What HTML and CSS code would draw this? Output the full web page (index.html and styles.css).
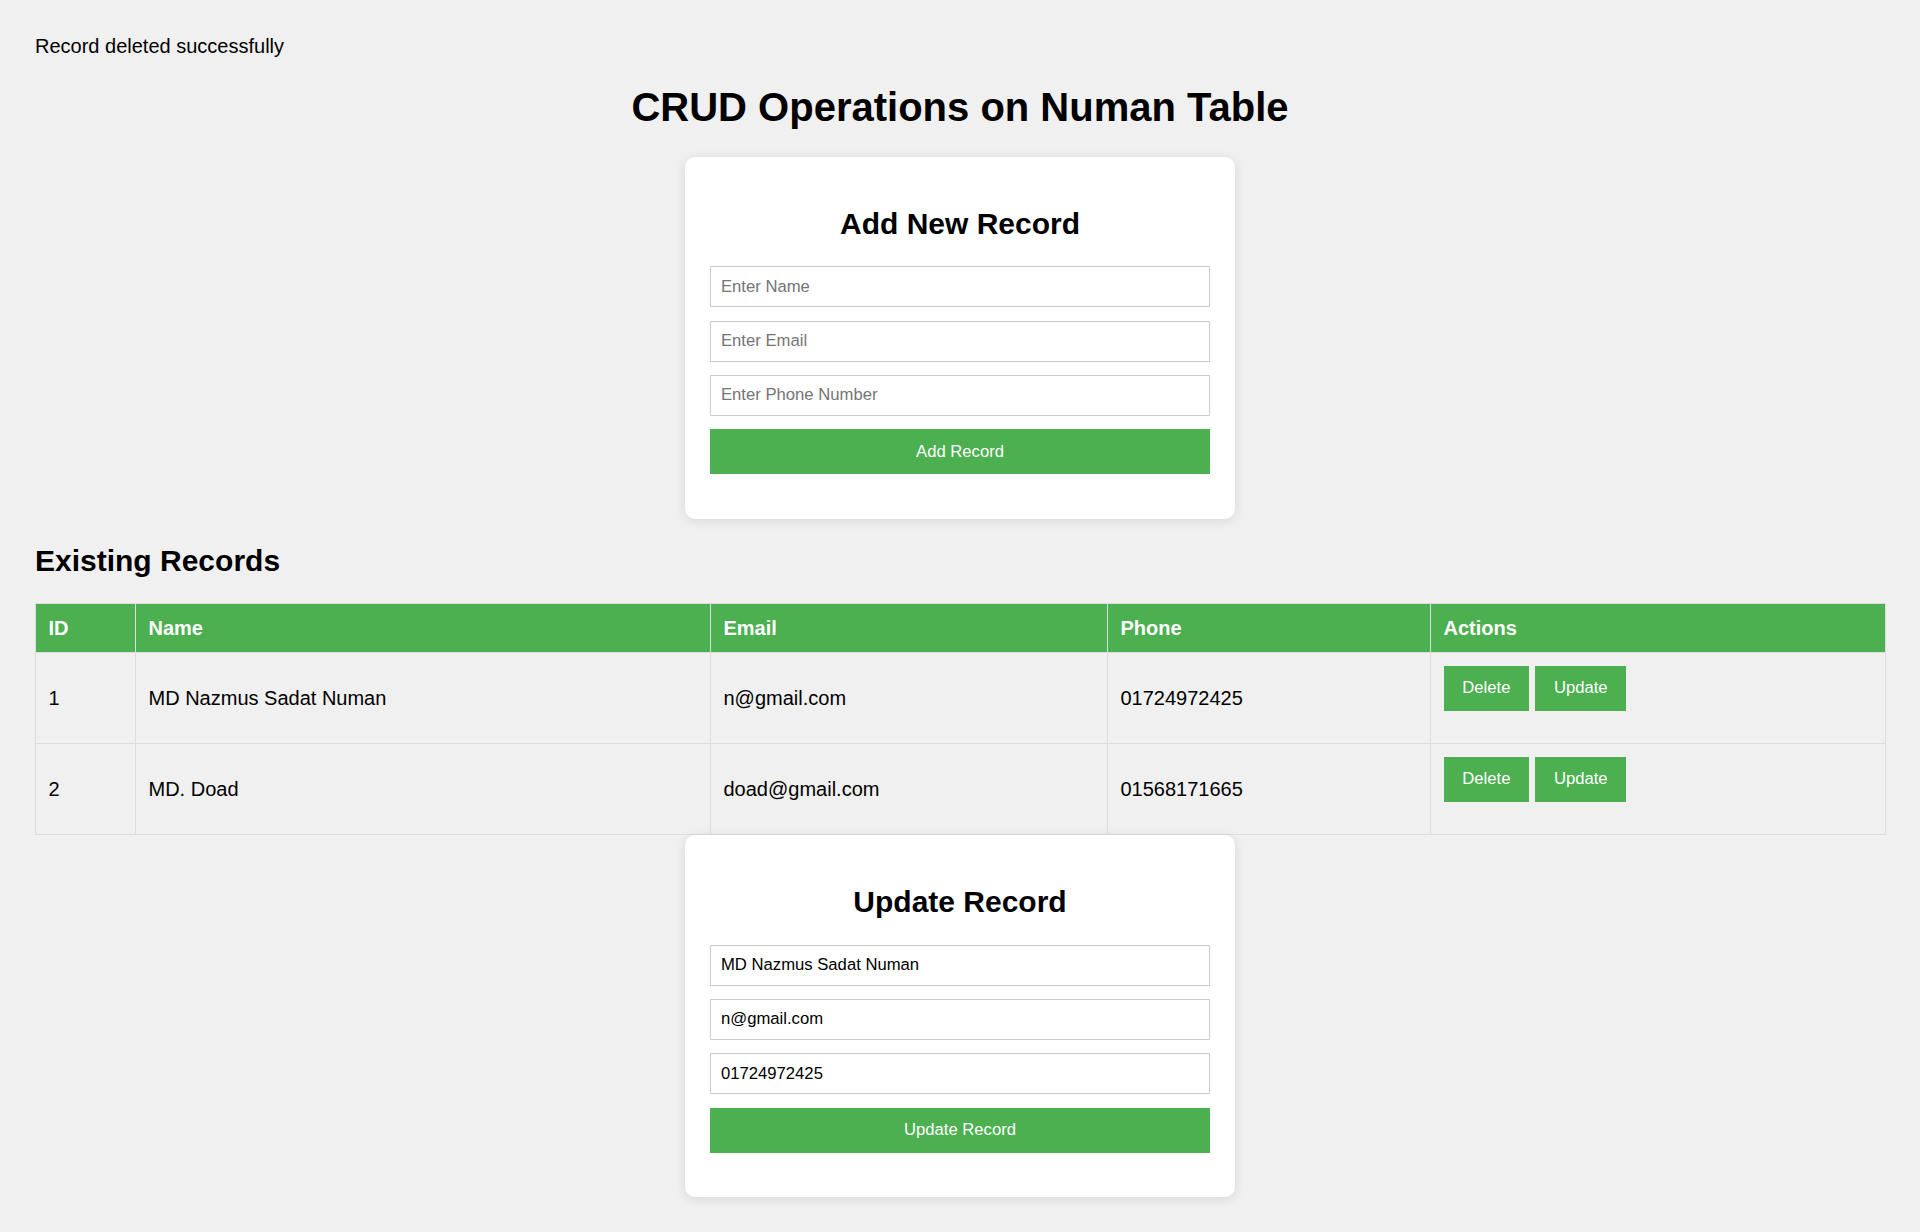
FILE: index.html
```html
<!DOCTYPE html>
<html lang="en">
<head>
<meta charset="utf-8">
<title>CRUD Operations on Numan Table</title>
<link rel="stylesheet" href="styles.css">
</head>
<body>
<div class="message">Record deleted successfully</div>
<h1 class="page-title">CRUD Operations on Numan Table</h1>

<div class="card">
  <h2 class="card-title">Add New Record</h2>
  <form class="card-form">
    <input class="field" type="text" placeholder="Enter Name">
    <input class="field" type="email" placeholder="Enter Email">
    <input class="field" type="text" placeholder="Enter Phone Number">
    <button class="btn-full" type="button">Add Record</button>
  </form>
</div>

<h2 class="section-title">Existing Records</h2>
<table class="records">
  <colgroup>
    <col class="col-id">
    <col class="col-name">
    <col class="col-email">
    <col class="col-phone">
    <col class="col-actions">
  </colgroup>
  <thead>
    <tr>
      <th>ID</th>
      <th>Name</th>
      <th>Email</th>
      <th>Phone</th>
      <th>Actions</th>
    </tr>
  </thead>
  <tbody>
    <tr>
      <td>1</td>
      <td>MD Nazmus Sadat Numan</td>
      <td>n@gmail.com</td>
      <td>01724972425</td>
      <td class="actions"><div class="action-row"><button class="btn-small" type="button">Delete</button><button class="btn-small" type="button">Update</button></div></td>
    </tr>
    <tr>
      <td>2</td>
      <td>MD. Doad</td>
      <td>doad@gmail.com</td>
      <td>01568171665</td>
      <td class="actions"><div class="action-row"><button class="btn-small" type="button">Delete</button><button class="btn-small" type="button">Update</button></div></td>
    </tr>
  </tbody>
</table>

<div class="card">
  <h2 class="card-title">Update Record</h2>
  <form class="card-form">
    <input class="field" type="text" value="MD Nazmus Sadat Numan">
    <input class="field" type="email" value="n@gmail.com">
    <input class="field" type="text" value="01724972425">
    <button class="btn-full" type="button">Update Record</button>
  </form>
</div>
</body>
</html>
```
FILE: styles.css
```css
html, body {
  margin: 0;
}

body {
  padding: 35px;
  background: #f0f0f0;
  color: #000;
  font-family: "Liberation Sans", Arial, sans-serif;
  font-size: 20px;
}

.message {
  line-height: 23px;
}

.page-title {
  font-size: 40px;
  font-weight: bold;
  text-align: center;
  margin: 26.4px 0;
  line-height: 46px;
}

.card {
  box-sizing: border-box;
  width: 550px;
  margin: 0 auto;
  padding: 25px;
  background: #fff;
  border-radius: 10px;
  box-shadow: 0 2px 12px rgba(0, 0, 0, 0.1);
}

.card-title {
  font-size: 30px;
  font-weight: bold;
  text-align: center;
  margin: 25px 0;
  line-height: 34.5px;
}

.card-form {
  margin: 0 0 19.5px;
  display: flex;
  flex-direction: column;
  gap: 13.3px;
}

.field {
  box-sizing: border-box;
  display: block;
  width: 100%;
  height: 41px;
  margin: 0;
  padding: 0 10px;
  border: 1px solid #ccc;
  border-radius: 0;
  background: #fff;
  color: #000;
  font-family: "Liberation Sans", Arial, sans-serif;
  font-size: 16.67px;
  outline: none;
}

.field::placeholder {
  color: #757575;
}

.btn-full {
  display: block;
  width: 100%;
  height: 45px;
  margin: 0;
  padding: 0;
  border: none;
  border-radius: 0;
  background: #4caf50;
  color: #fff;
  font-family: "Liberation Sans", Arial, sans-serif;
  font-size: 16.67px;
  cursor: pointer;
}

.section-title {
  font-size: 30px;
  font-weight: bold;
  margin: 25px 0;
  line-height: 34.5px;
}

.records {
  width: 100%;
  border-collapse: collapse;
  table-layout: fixed;
}

.col-id { width: 100px; }
.col-name { width: 575px; }
.col-email { width: 397px; }
.col-phone { width: 323px; }
.col-actions { width: 455px; }

.records th,
.records td {
  padding: 12.5px;
  border: 1px solid #ddd;
  text-align: left;
  vertical-align: middle;
}

.records th {
  background: #4caf50;
  color: #fff;
  font-weight: bold;
  line-height: 23px;
}

.records td {
  line-height: 23px;
}

.action-row {
  display: flex;
  gap: 6px;
  padding-bottom: 20px;
}

.btn-small {
  height: 45px;
  margin: 0;
  padding: 0 18.75px;
  border: none;
  border-radius: 0;
  background: #4caf50;
  color: #fff;
  font-family: "Liberation Sans", Arial, sans-serif;
  font-size: 16.67px;
  cursor: pointer;
}
```
